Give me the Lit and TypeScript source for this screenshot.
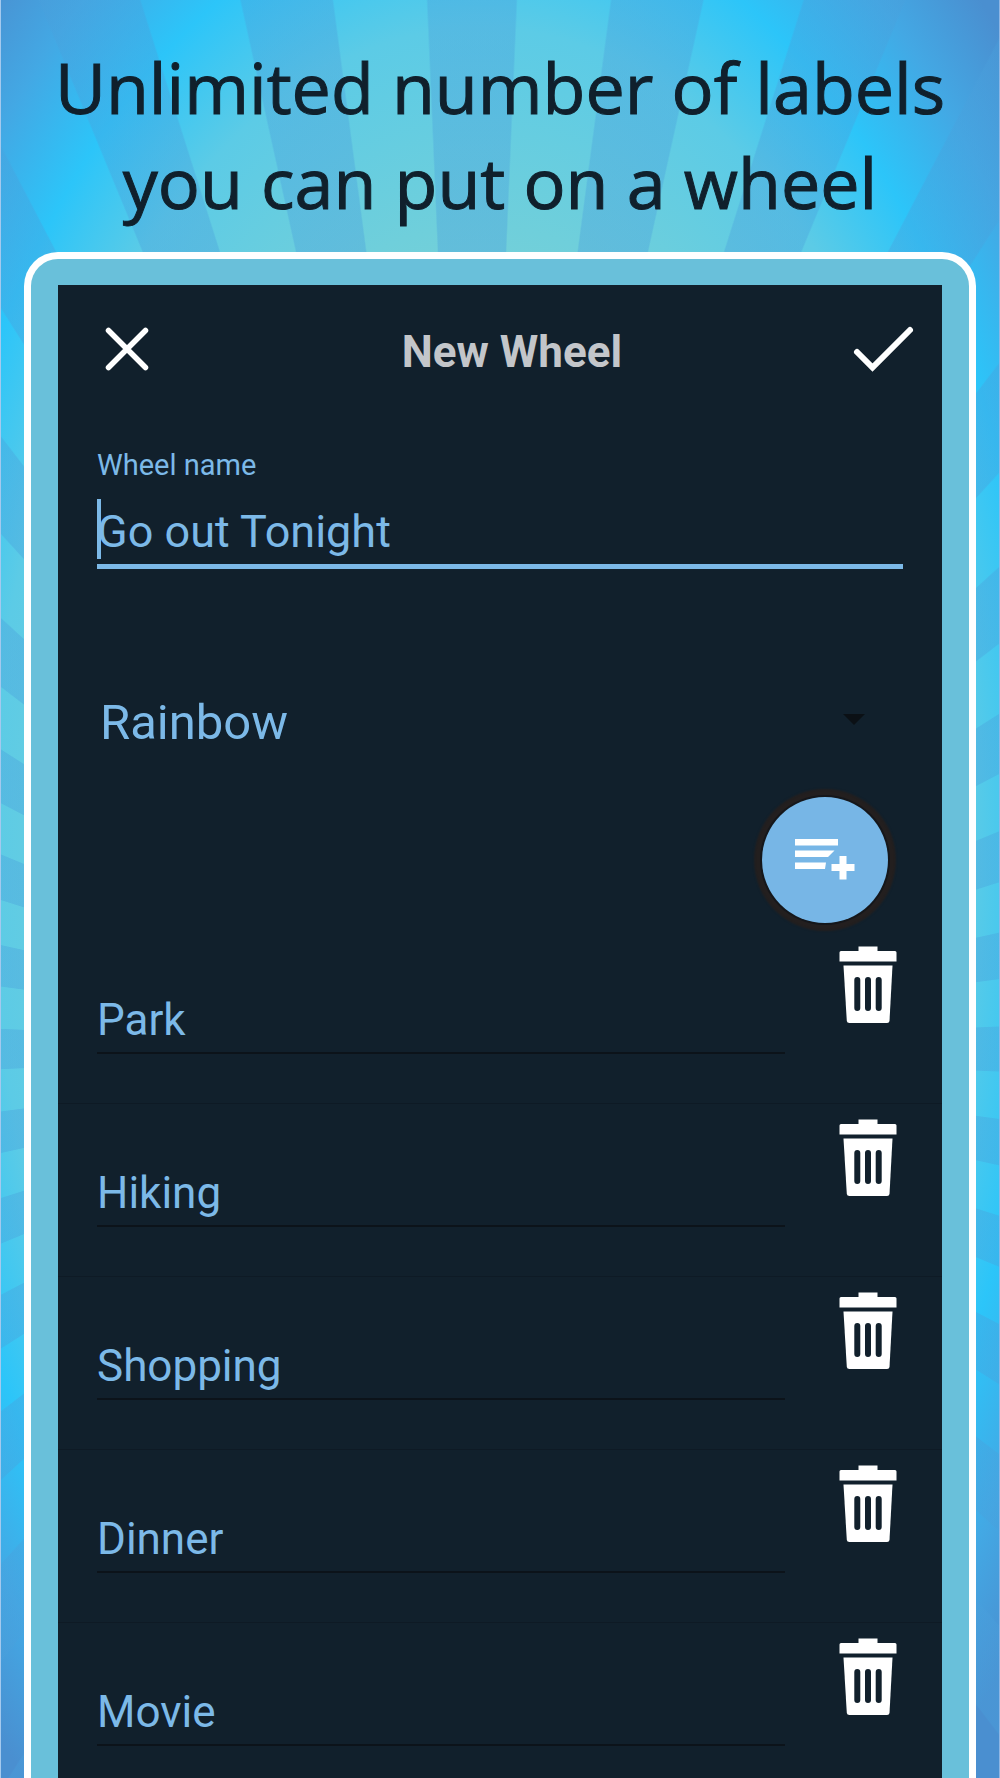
import { LitElement, html, css, svg } from "lit";
import { customElement, property, state } from "lit/decorators.js";

const closeIcon = svg`<svg width="50" height="50" viewBox="0 0 50 50" aria-hidden="true">
  <path d="M6.500 6.500 43.500 43.500M43.500 6.500 6.500 43.500" fill="none" stroke="#fff" stroke-width="5.500" stroke-linecap="round"/>
</svg>`;

const checkIcon = svg`<svg width="64" height="50" viewBox="0 0 64 50" aria-hidden="true">
  <path d="M5 28 20.500 43.500 58 6" fill="none" stroke="#fff" stroke-width="6" stroke-linecap="round" stroke-linejoin="miter"/>
</svg>`;

const addIcon = svg`<svg width="60" height="42" viewBox="0 0 60 42" aria-hidden="true" fill="#fff">
  <path d="M0 0H43V6.500H0ZM0 11.500H39.500L33 18H0ZM0 23.500H31L30 30H0Z"/>
  <path d="M44.500 17H51.500V25H59.500V32H51.500V40.500H44.500V32H36.500V25H44.500Z"/>
</svg>`;

const trashIcon = svg`<svg width="58" height="78" viewBox="0 0 58 78" aria-hidden="true">
  <path d="M19.500 0.500H38.500V5H56Q57.500 5 57.500 6.500V15.500H0.500V6.500Q0.500 5 2 5H19.500Z" fill="#fff"/>
  <path d="M4.500 19.500H53.500L50.500 75Q50.300 77 48 77H10.500Q8 77 7.800 75Z" fill="#fff"/>
  <path d="M18.300 34V62M29 34V62M39.700 34V62" fill="none" stroke="#11202c" stroke-width="6" stroke-linecap="round"/>
</svg>`;

@customElement("wheel-label-row")
export class WheelLabelRow extends LitElement {
  @property() value = "";

  static styles = css`
    :host {
      display: flex;
      align-items: flex-start;
      gap: 54px;
      padding: 0 45px 0 39px;
    }
    .text {
      flex: 1;
      min-width: 0;
      height: 66px;
      margin: 57px 0 0;
      padding: 0;
      box-sizing: border-box;
      border: 0;
      border-bottom: 2px solid #0c131a;
      border-radius: 0;
      outline: none;
      background: none;
      color: #7cb9e8;
      font: 400 44px Roboto, sans-serif;
    }
    .remove {
      flex: none;
      margin: 15px 0 0;
      padding: 0;
      border: 0;
      background: none;
      cursor: pointer;
    }
    .remove svg {
      display: block;
    }
  `;

  private remove() {
    this.dispatchEvent(new CustomEvent("remove-label"));
  }

  render() {
    return html`
      <input class="text" type="text" aria-label="Label" .value=${this.value} />
      <button class="remove" type="button" aria-label="Delete label" @click=${this.remove}>${trashIcon}</button>
    `;
  }
}

@customElement("app-root")
export class AppRoot extends LitElement {
  @state() private labels = ["Park", "Hiking", "Shopping", "Dinner", "Movie"];

  static styles = css`
    :host {
      display: flex;
      flex-direction: column;
      min-height: 100vh;
      box-sizing: border-box;
      font-family: Roboto, sans-serif;
      background:
        linear-gradient(90deg, #a4c9ee 0 1px, transparent 1px calc(100% - 1px), #8fb6e4 calc(100% - 1px)),
        repeating-conic-gradient(
          from -2.4deg at 47.2% 59%,
          rgba(74, 160, 220, 0.38) 0deg 4.800deg,
          transparent 4.900deg 9.900deg,
          rgba(74, 160, 220, 0.38) 10deg
        ),
        radial-gradient(
          ellipse 57% 54% at 48% 48%,
          #74d0d8 60%,
          #5ccbe6 86%,
          #2cc5f9 100%,
          #43a8e4 113%,
          #4a8fd0 125%
        );
    }
    .headline {
      margin: 0;
      padding: 40px 24px 22px;
      text-align: center;
      color: #10202c;
      font: 400 70px/95px "Open Sans", sans-serif;
      -webkit-text-stroke: 1px #10202c;
    }
    .line {
      display: block;
    }
    .frame {
      flex: 1;
      display: flex;
      margin: 0 24px;
      padding: 26px 27px 0;
      border: 7px solid #fff;
      border-bottom: 0;
      border-radius: 34px 34px 0 0;
      background: #69c0da;
    }
    .screen {
      flex: 1;
      min-width: 0;
      background: #11202c;
      color: #7cb9e8;
    }
    .bar {
      display: flex;
      align-items: center;
      height: 127px;
      padding: 0 26px 0 44px;
    }
    .title {
      flex: 1;
      margin: 0;
      padding: 6px 0 0 20px;
      text-align: center;
      color: #c3c6ca;
      font: 700 44px/52px Roboto, sans-serif;
    }
    .icon-button {
      flex: none;
      padding: 0;
      border: 0;
      background: none;
      cursor: pointer;
    }
    .icon-button svg {
      display: block;
    }
    .form {
      padding: 36px 39px 0;
    }
    .name-label {
      display: block;
      margin-bottom: 17px;
      font-size: 29px;
      line-height: 34px;
    }
    .name-field {
      position: relative;
    }
    .name-input {
      display: block;
      width: 100%;
      height: 70px;
      box-sizing: border-box;
      padding: 0;
      border: 0;
      border-bottom: 5px solid #7cb9e8;
      border-radius: 0;
      outline: none;
      background: none;
      color: inherit;
      font: 400 45px Roboto, sans-serif;
    }
    .caret {
      position: absolute;
      top: 0;
      left: 0;
      width: 4px;
      height: 60px;
      background: #7cb9e8;
    }
    .palette {
      display: grid;
      align-items: center;
      margin-top: 120px;
    }
    .palette-select {
      grid-area: 1 / 1;
      appearance: none;
      width: 100%;
      height: 66px;
      padding: 0 0 0 3px;
      border: 0;
      outline: none;
      background: none;
      color: inherit;
      font: 400 49px Roboto, sans-serif;
    }
    .palette-arrow {
      grid-area: 1 / 1;
      justify-self: end;
      margin-right: 38px;
      pointer-events: none;
    }
    .add-row {
      display: flex;
      justify-content: flex-end;
      padding: 42px 54px 8px;
    }
    .add {
      display: grid;
      place-items: center;
      width: 126px;
      height: 126px;
      padding: 0;
      border: 0;
      border-radius: 50%;
      background: #77b6e6;
      box-shadow: 0 0 0 2px #15171b, 0 0 2px 8px #231f1f;
      cursor: pointer;
    }
    .labels {
      margin: 0;
      padding: 0;
      list-style: none;
    }
    .label-item {
      padding-bottom: 49px;
      border-bottom: 1px solid #0e1a25;
    }
    .label-item:last-child {
      padding-bottom: 31px;
      border-bottom: 0;
    }
  `;

  private removeAt(index: number) {
    this.labels = this.labels.filter((_, i) => i !== index);
  }

  private addLabel() {
    this.labels = ["", ...this.labels];
  }

  render() {
    return html`
      <h1 class="headline">
        <span class="line">Unlimited number of labels</span>
        <span class="line">you can put on a wheel</span>
      </h1>
      <div class="frame">
        <main class="screen">
          <header class="bar">
            <button class="icon-button" type="button" aria-label="Close">${closeIcon}</button>
            <h2 class="title">New Wheel</h2>
            <button class="icon-button" type="button" aria-label="Save">${checkIcon}</button>
          </header>
          <section class="form">
            <label class="name-label" for="wheel-name">Wheel name</label>
            <div class="name-field">
              <input class="name-input" id="wheel-name" type="text" value="Go out Tonight" />
              <span class="caret"></span>
            </div>
            <div class="palette">
              <select class="palette-select" aria-label="Palette">
                <option>Rainbow</option>
              </select>
              <svg class="palette-arrow" width="22" height="16" viewBox="0 0 22 16" aria-hidden="true">
                <path d="M0 0H22L11 11Z" fill="#0b1015" />
              </svg>
            </div>
          </section>
          <div class="add-row">
            <button class="add" type="button" aria-label="Add label" @click=${this.addLabel}>${addIcon}</button>
          </div>
          <ul class="labels">
            ${this.labels.map(
              (label, i) => html`<li class="label-item">
                <wheel-label-row .value=${label} @remove-label=${() => this.removeAt(i)}></wheel-label-row>
              </li>`
            )}
          </ul>
        </main>
      </div>
    `;
  }
}
